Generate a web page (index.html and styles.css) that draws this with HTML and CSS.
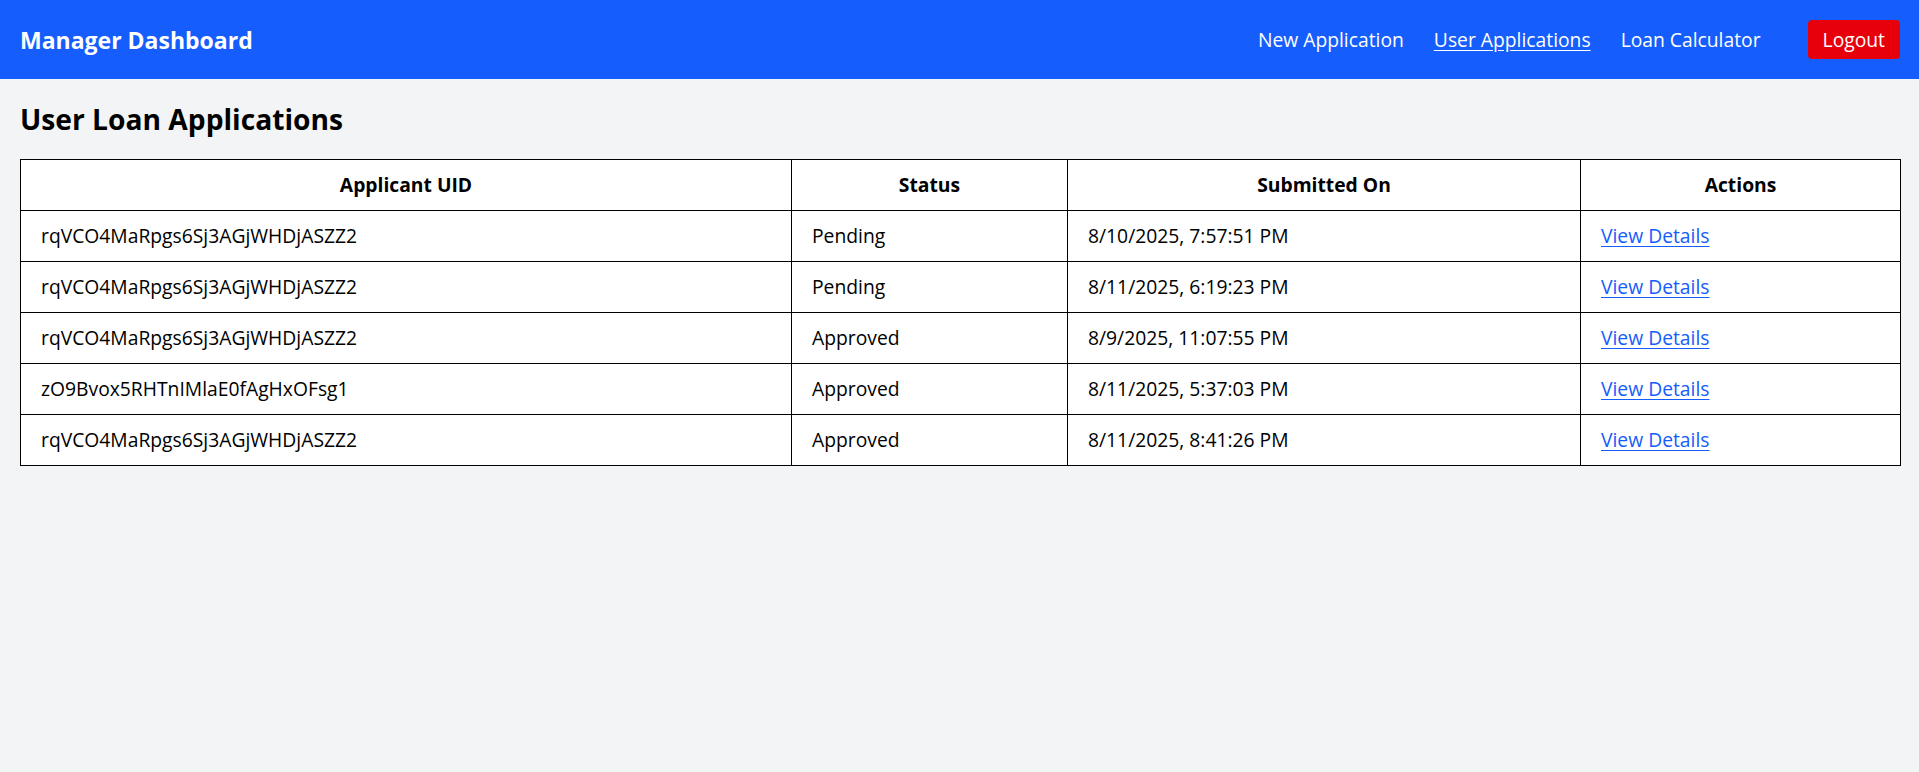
FILE: index.html
```html
<!DOCTYPE html>
<html lang="en">
<head>
<meta charset="utf-8">
<title>Manager Dashboard</title>
<link rel="stylesheet" href="styles.css">
</head>
<body>
<nav class="navbar">
  <div class="brand">Manager Dashboard</div>
  <div class="nav-links">
    <a class="nav-link" href="#">New Application</a>
    <a class="nav-link active" href="#">User Applications</a>
    <a class="nav-link" href="#">Loan Calculator</a>
    <button class="logout-btn" type="button">Logout</button>
  </div>
</nav>
<main class="content">
  <h1 class="page-title">User Loan Applications</h1>
  <table class="app-table">
    <colgroup>
      <col class="col-uid">
      <col class="col-status">
      <col class="col-date">
      <col class="col-actions">
    </colgroup>
    <thead>
      <tr>
        <th>Applicant UID</th>
        <th>Status</th>
        <th>Submitted On</th>
        <th>Actions</th>
      </tr>
    </thead>
    <tbody>
      <tr>
        <td>rqVCO4MaRpgs6Sj3AGjWHDjASZZ2</td>
        <td>Pending</td>
        <td>8/10/2025, 7:57:51 PM</td>
        <td><a class="details-link" href="#">View Details</a></td>
      </tr>
      <tr>
        <td>rqVCO4MaRpgs6Sj3AGjWHDjASZZ2</td>
        <td>Pending</td>
        <td>8/11/2025, 6:19:23 PM</td>
        <td><a class="details-link" href="#">View Details</a></td>
      </tr>
      <tr>
        <td>rqVCO4MaRpgs6Sj3AGjWHDjASZZ2</td>
        <td>Approved</td>
        <td>8/9/2025, 11:07:55 PM</td>
        <td><a class="details-link" href="#">View Details</a></td>
      </tr>
      <tr>
        <td>zO9Bvox5RHTnIMlaE0fAgHxOFsg1</td>
        <td>Approved</td>
        <td>8/11/2025, 5:37:03 PM</td>
        <td><a class="details-link" href="#">View Details</a></td>
      </tr>
      <tr>
        <td>rqVCO4MaRpgs6Sj3AGjWHDjASZZ2</td>
        <td>Approved</td>
        <td>8/11/2025, 8:41:26 PM</td>
        <td><a class="details-link" href="#">View Details</a></td>
      </tr>
    </tbody>
  </table>
</main>
</body>
</html>
```
FILE: styles.css
```css
* {
  box-sizing: border-box;
}

html, body {
  margin: 0;
  padding: 0;
}

body {
  background: #f3f4f6;
  font-family: "Segoe UI", "Open Sans", "Noto Sans", sans-serif;
  color: #000;
  min-height: 772px;
}

.navbar {
  height: 79px;
  background: #155dfc;
  display: flex;
  align-items: center;
  justify-content: space-between;
  padding: 0 19px 0 20px;
}

.brand {
  color: #fff;
  font-size: 23px;
  font-weight: 700;
  line-height: 32px;
}

.nav-links {
  display: flex;
  align-items: center;
}

.nav-link {
  color: #fff;
  font-size: 19.3px;
  line-height: 26px;
  text-decoration: none;
  margin-right: 30px;
}

.nav-link.active {
  text-decoration: underline;
  text-underline-offset: 3px;
}

.logout-btn {
  font-family: inherit;
  margin-left: 17px;
  background: #e7000b;
  color: #fff;
  border: none;
  border-radius: 4px;
  font-size: 19.3px;
  line-height: 26px;
  height: 39px;
  padding: 0 15px;
  cursor: pointer;
}

.content {
  padding: 24px 19px 20px 20px;
}

.page-title {
  margin: 0 0 24px 0;
  font-size: 28.2px;
  line-height: 32px;
  font-weight: 700;
}

.app-table {
  width: 100%;
  table-layout: fixed;
  border-collapse: collapse;
  background: #fff;
  font-size: 19.3px;
}

.col-uid { width: 771px; }
.col-status { width: 276px; }
.col-date { width: 513px; }
.col-actions { width: 320px; }

.app-table th,
.app-table td {
  border: 1px solid #000;
  padding: 12px 20px;
  line-height: 26px;
  text-align: left;
}

.app-table th {
  text-align: center;
  font-weight: 700;
}

.details-link {
  color: #155dfc;
  text-decoration: underline;
  text-underline-offset: 3px;
}
```
